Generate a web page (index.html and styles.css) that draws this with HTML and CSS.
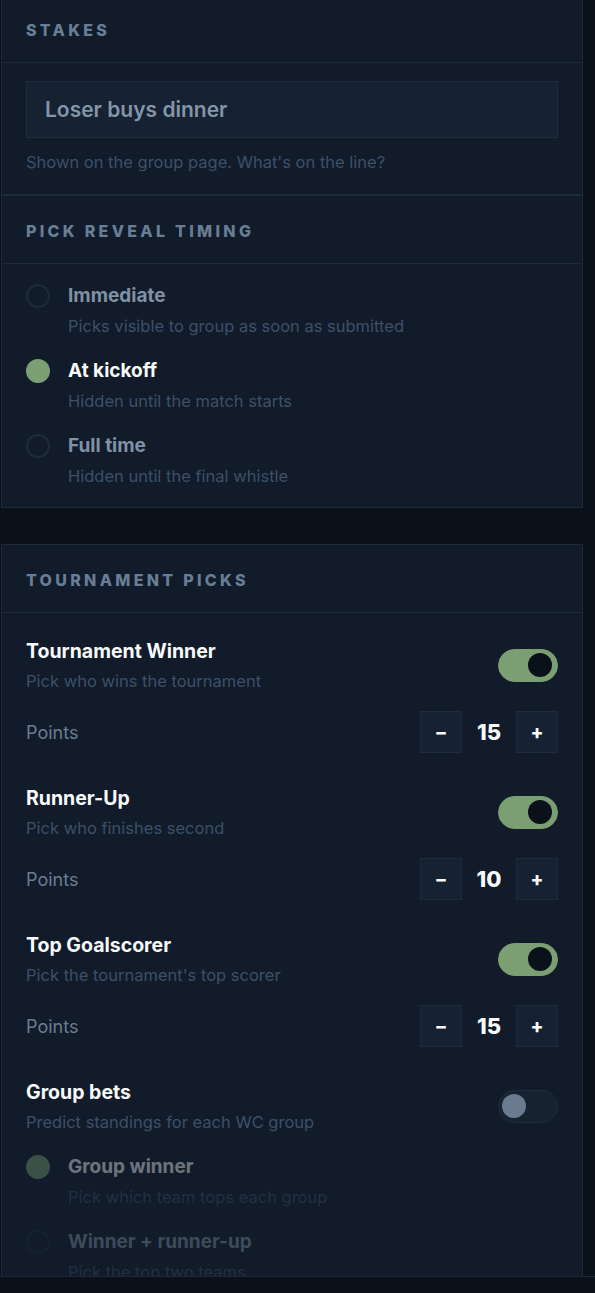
FILE: index.html
```html
<!DOCTYPE html>
<html lang="en">
<head>
    <meta charset="UTF-8">
    <meta name="viewport" content="width=device-width, initial-scale=1.0">
    <title>Group settings</title>
    <link rel="stylesheet" href="styles.css">
</head>
<body>

<div class="page">
    <section class="card card-first">
        <div class="section">
            <div class="section-head"><h2>Stakes</h2></div>
            <div class="section-body">
                <input type="text" class="text-field" value="Loser buys dinner">
                <p class="hint">Shown on the group page. What's on the line?</p>
            </div>
        </div>

        <div class="section section-split">
            <div class="section-head"><h2>Pick reveal timing</h2></div>
            <div class="section-body options">
                <div class="option">
                    <span class="radio"></span>
                    <div>
                        <div class="option-label">Immediate</div>
                        <div class="option-desc">Picks visible to group as soon as submitted</div>
                    </div>
                </div>
                <div class="option selected">
                    <span class="radio"></span>
                    <div>
                        <div class="option-label">At kickoff</div>
                        <div class="option-desc">Hidden until the match starts</div>
                    </div>
                </div>
                <div class="option">
                    <span class="radio"></span>
                    <div>
                        <div class="option-label">Full time</div>
                        <div class="option-desc">Hidden until the final whistle</div>
                    </div>
                </div>
            </div>
        </div>
    </section>

    <section class="card">
        <div class="section-head"><h2>Tournament picks</h2></div>
        <div class="section-body picks">
            <div class="pick">
                <div class="pick-head">
                    <div>
                        <div class="pick-title">Tournament Winner</div>
                        <div class="pick-desc">Pick who wins the tournament</div>
                    </div>
                    <span class="toggle on"></span>
                </div>
                <div class="points-row">
                    <span class="points-label">Points</span>
                    <div class="stepper">
                        <button>–</button>
                        <span class="value">15</span>
                        <button>+</button>
                    </div>
                </div>
            </div>

            <div class="pick">
                <div class="pick-head">
                    <div>
                        <div class="pick-title">Runner-Up</div>
                        <div class="pick-desc">Pick who finishes second</div>
                    </div>
                    <span class="toggle on"></span>
                </div>
                <div class="points-row">
                    <span class="points-label">Points</span>
                    <div class="stepper">
                        <button>–</button>
                        <span class="value">10</span>
                        <button>+</button>
                    </div>
                </div>
            </div>

            <div class="pick">
                <div class="pick-head">
                    <div>
                        <div class="pick-title">Top Goalscorer</div>
                        <div class="pick-desc">Pick the tournament's top scorer</div>
                    </div>
                    <span class="toggle on"></span>
                </div>
                <div class="points-row">
                    <span class="points-label">Points</span>
                    <div class="stepper">
                        <button>–</button>
                        <span class="value">15</span>
                        <button>+</button>
                    </div>
                </div>
            </div>

            <div class="pick">
                <div class="pick-head">
                    <div>
                        <div class="pick-title">Group bets</div>
                        <div class="pick-desc">Predict standings for each WC group</div>
                    </div>
                    <span class="toggle"></span>
                </div>
                <div class="options sub-options">
                    <div class="option selected">
                        <span class="radio"></span>
                        <div>
                            <div class="option-label">Group winner</div>
                            <div class="option-desc">Pick which team tops each group</div>
                        </div>
                    </div>
                    <div class="option">
                        <span class="radio"></span>
                        <div>
                            <div class="option-label">Winner + runner-up</div>
                            <div class="option-desc">Pick the top two teams</div>
                        </div>
                    </div>
                </div>
            </div>
        </div>
    </section>
</div>

<div class="bottom-bar"></div>

</body>
</html>
```

FILE: styles.css
```css
body {
    margin: 0;
    font-family: 'Inter', 'Roboto', sans-serif;
    background: #0b111a;
    color: #f1f5f9;
    overflow: hidden;
}

.page {
    padding: 0 12px 0 1px;
    display: flex;
    flex-direction: column;
    gap: 36px;
}

.card {
    background: #111b29;
    border: 1px solid #1e2a3a;
}

.card-first {
    margin-top: -6px;
}

.section-split {
    border-top: 2px solid #1e2a3a;
}

.section-head {
    padding: 27px 24px 24px;
    border-bottom: 1px solid #1e2a3a;
}

.section-head h2 {
    margin: 0;
    font-size: 16px;
    line-height: 16px;
    font-weight: 800;
    letter-spacing: 3.3px;
    text-transform: uppercase;
    color: #687e96;
}

.section-body {
    padding: 18px 24px 21px;
}

.text-field {
    display: block;
    box-sizing: border-box;
    width: 100%;
    height: 57px;
    margin: 0;
    padding: 0 18px;
    font-family: inherit;
    font-size: 21px;
    font-weight: 600;
    color: #8395aa;
    background: #162131;
    border: 1px solid #1f2d3e;
    border-radius: 0;
    outline: none;
}

.hint {
    margin: 13px 0 0;
    font-size: 16.5px;
    line-height: 22px;
    color: #3d5069;
}

.options {
    display: flex;
    flex-direction: column;
    gap: 22px;
}

.section-body.options {
    padding-top: 20px;
    padding-bottom: 20px;
}

.option {
    display: flex;
    gap: 18px;
}

.radio {
    flex: none;
    box-sizing: border-box;
    width: 24px;
    height: 24px;
    border-radius: 50%;
    border: 2px solid #1e2b3b;
}

.option.selected .radio {
    background: #7b9f73;
    border-color: #7b9f73;
}

.option-label {
    font-size: 19px;
    line-height: 24px;
    font-weight: 700;
    color: #8091a5;
}

.option.selected .option-label {
    color: #f8fafc;
}

.option-desc {
    margin-top: 7px;
    font-size: 16.5px;
    line-height: 22px;
    color: #3d5069;
}

.picks {
    padding-top: 26px;
    display: flex;
    flex-direction: column;
    gap: 33px;
}

.pick-head {
    display: flex;
    align-items: center;
    justify-content: space-between;
}

.pick-title {
    font-size: 19.5px;
    line-height: 24px;
    font-weight: 700;
    color: #f8fafc;
}

.pick-desc {
    margin-top: 7px;
    font-size: 16.5px;
    line-height: 22px;
    color: #3d5069;
}

.toggle {
    flex: none;
    position: relative;
    box-sizing: border-box;
    width: 60px;
    height: 33px;
    border-radius: 17px;
    background: #172231;
    border: 1px solid #1f2d3e;
}

.toggle::after {
    content: "";
    position: absolute;
    top: 3px;
    left: 3px;
    width: 24px;
    height: 24px;
    border-radius: 50%;
    background: #6b7b8f;
}

.toggle.on {
    background: #7b9f73;
    border-color: #7b9f73;
}

.toggle.on::after {
    left: auto;
    right: 5px;
    background: #0b111a;
}

.points-row {
    margin-top: 19px;
    display: flex;
    align-items: center;
    justify-content: space-between;
}

.points-label {
    font-size: 18px;
    color: #6b7d92;
}

.stepper {
    display: flex;
    align-items: center;
    gap: 12px;
}

.stepper button {
    width: 42px;
    height: 42px;
    padding: 0;
    font-family: inherit;
    font-size: 19px;
    font-weight: 800;
    color: #f8fafc;
    background: #162131;
    border: 1px solid #1f2b3b;
    cursor: pointer;
}

.stepper .value {
    min-width: 30px;
    text-align: center;
    font-size: 22px;
    font-weight: 800;
    color: #f8fafc;
}

.sub-options {
    margin-top: 22px;
    opacity: 0.4;
}

.bottom-bar {
    position: fixed;
    left: 0;
    right: 0;
    bottom: 0;
    height: 16px;
    background: #0b111a;
    border-top: 1px solid #1c2838;
}
```
